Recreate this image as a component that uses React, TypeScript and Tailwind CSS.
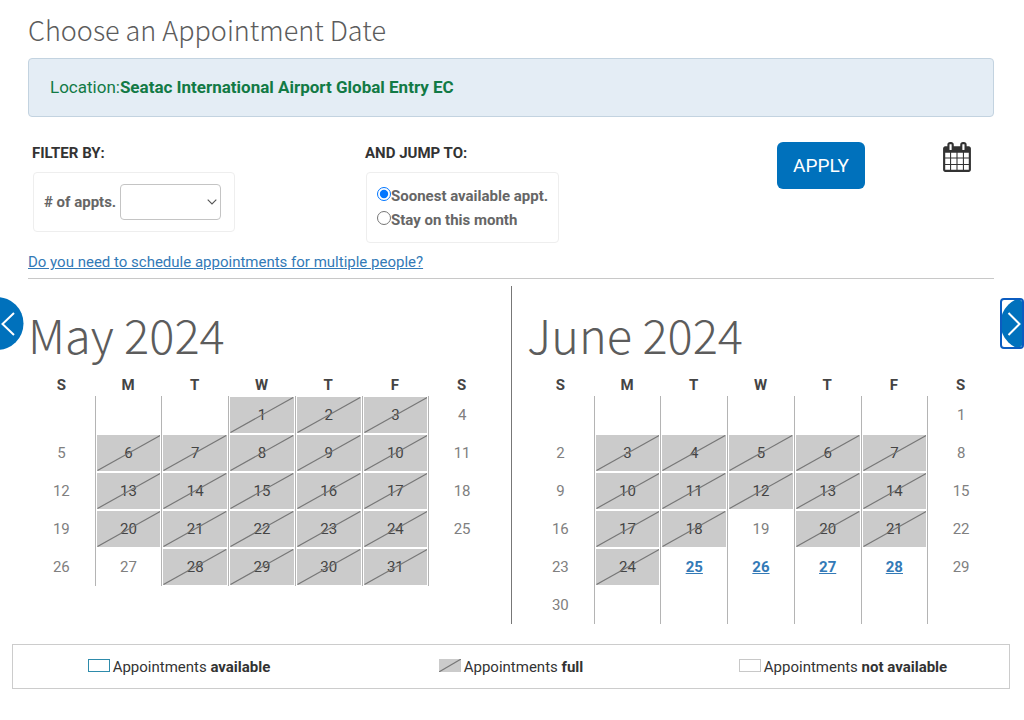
import React, { useState } from 'react';
import { clsx } from 'clsx';

type DayStatus = 'blank' | 'full' | 'open' | 'none';

interface Day {
  label: string;
  status: DayStatus;
}

interface MonthData {
  name: string;
  offset: number; // weekday of the 1st, Sunday = 0
  days: number;
  rows: number;
  full: number[];
  open: number[];
}

const WEEKDAYS = ['S', 'M', 'T', 'W', 'T', 'F', 'S'];

const MAY: MonthData = {
  name: 'May 2024',
  offset: 3,
  days: 31,
  rows: 5,
  full: [1, 2, 3, 6, 7, 8, 9, 10, 13, 14, 15, 16, 17, 20, 21, 22, 23, 24, 28, 29, 30, 31],
  open: [],
};

const JUNE: MonthData = {
  name: 'June 2024',
  offset: 6,
  days: 30,
  rows: 6,
  full: [3, 4, 5, 6, 7, 10, 11, 12, 13, 14, 17, 18, 20, 21, 24],
  open: [25, 26, 27, 28],
};

const buildWeeks = (month: MonthData): Day[][] =>
  Array.from({ length: month.rows }, (_, row) =>
    Array.from({ length: 7 }, (_, col) => {
      const day = row * 7 + col - month.offset + 1;
      if (day < 1 || day > month.days) return { label: '', status: 'blank' };
      if (month.full.includes(day)) return { label: String(day), status: 'full' };
      if (month.open.includes(day)) return { label: String(day), status: 'open' };
      return { label: String(day), status: 'none' };
    })
  );

const Slash = () => (
  <svg className="absolute inset-0 h-full w-full" viewBox="0 0 64 36" preserveAspectRatio="none" aria-hidden="true">
    <path d="M0.5 35.5L63.5 0.5" stroke="#777777" strokeWidth="1.2" vectorEffect="non-scaling-stroke" />
  </svg>
);

const CalendarIcon = () => (
  <svg className="h-[30px] w-7" viewBox="64 0 1664 1792" fill="currentColor" aria-hidden="true">
    <path d="M192 1664h288v-288h-288v288zm352 0h320v-288h-320v288zm-352-352h288v-320h-288v320zm352 0h320v-320h-320v320zm-352-384h288v-288h-288v288zm736 736h320v-288h-320v288zm-384-736h320v-288h-320v288zm768 736h288v-288h-288v288zm-384-352h320v-320h-320v320zm-352-864v-288q0-13-9.5-22.5t-22.5-9.5h-64q-13 0-22.5 9.5t-9.5 22.5v288q0 13 9.5 22.5t22.5 9.5h64q13 0 22.5-9.5t9.5-22.5zm736 864h288v-320h-288v320zm-384-384h320v-288h-320v288zm384 0h288v-288h-288v288zm32-480v-288q0-13-9.5-22.5t-22.5-9.5h-64q-13 0-22.5 9.5t-9.5 22.5v288q0 13 9.5 22.5t22.5 9.5h64q13 0 22.5-9.5t9.5-22.5zm384-64v1280q0 52-38 90t-90 38h-1408q-52 0-90-38t-38-90v-1280q0-52 38-90t90-38h128v-96q0-66 47-113t113-47h64q66 0 113 47t47 113v96h384v-96q0-66 47-113t113-47h64q66 0 113 47t47 113v96h128q52 0 90 38t38 90z" />
  </svg>
);

const DayCell: React.FC<{ day: Day; lined: boolean }> = ({ day, lined }) => (
  <td className={clsx('h-[38px] p-px text-center', lined && 'border-l border-[#b4b4b4]')}>
    {day.status === 'full' && (
      <div className="relative flex h-9 items-center justify-center bg-[#cbcbcb] text-[#444444]">
        <Slash />
        <span>{day.label}</span>
      </div>
    )}
    {day.status === 'open' && (
      <a href="#" className="font-bold text-[#337ab7] underline">{day.label}</a>
    )}
    {day.status === 'none' && <span className="text-[#808080]">{day.label}</span>}
  </td>
);

const Month: React.FC<{ month: MonthData }> = ({ month }) => (
  <>
    <h2 className="pt-4 font-['Noto_Sans_CJK_SC',sans-serif] text-[47px] leading-[64px] font-light text-[#5c5c5c]">
      {month.name}
    </h2>
    <table className="w-full table-fixed border-separate border-spacing-0">
      <thead>
        <tr>
          {WEEKDAYS.map((d, i) => (
            <th key={i} className="h-[30px] p-0 pt-2 leading-5 font-bold text-[#444444]">{d}</th>
          ))}
        </tr>
      </thead>
      <tbody>
        {buildWeeks(month).map((week, row) => (
          <tr key={row}>
            {week.map((day, col) => (
              <DayCell key={col} day={day} lined={col > 0} />
            ))}
          </tr>
        ))}
      </tbody>
    </table>
  </>
);

export default function App() {
  const [count, setCount] = useState('');
  const [jump, setJump] = useState('soonest');

  return (
    <div className="relative overflow-hidden bg-white pt-2.5 font-[Roboto,sans-serif] text-[15px] leading-6 text-[#333333]">
      <main className="mr-[30px] ml-7">
        <h1 className="font-['Noto_Sans_CJK_SC',sans-serif] text-[27px] leading-10 font-light text-[#5c5c5c]">
          Choose an Appointment Date
        </h1>

        <div className="mt-2 rounded border border-[#c3d3e0] bg-[#e4edf5] px-[21px] pt-4 pb-[17px] text-[17px] text-[#127a45]">
          Location:<strong className="font-bold">Seatac International Airport Global Entry EC</strong>
        </div>

        {/* Filters */}
        <div className="flex items-start pt-6">
          <div className="w-[333px] shrink-0 pl-1">
            <div className="font-bold">FILTER BY:</div>
            <div className="mt-[7px] ml-px flex h-[60px] w-[202px] items-center gap-1 rounded border border-[#eeeeee] pl-2.5">
              <label htmlFor="appts" className="font-bold text-[#666666]"># of appts.</label>
              <div className="relative">
                <select
                  id="appts"
                  value={count}
                  onChange={(e) => setCount(e.target.value)}
                  className="block h-9 w-[101px] appearance-none rounded border border-[#c4c4c4] bg-white px-2"
                >
                  <option value=""></option>
                  <option value="1">1</option>
                  <option value="2">2</option>
                </select>
                <svg className="pointer-events-none absolute top-[15px] right-1 h-1.5 w-2.5" viewBox="0 0 10 6" fill="none" aria-hidden="true">
                  <path d="M0.7 0.7L5 5L9.3 0.7" stroke="#555555" strokeWidth="1.1" />
                </svg>
              </div>
            </div>
          </div>

          <div className="grow pl-1">
            <div className="font-bold">AND JUMP TO:</div>
            <div className="mt-[7px] ml-px flex h-[71px] w-[193px] flex-col justify-center rounded border border-[#eeeeee] pt-px pl-2.5 font-bold text-[#666666]">
              <label className="flex items-center">
                <input
                  type="radio"
                  name="jump"
                  className="mb-1 h-3.5 w-3.5 shrink-0 accent-[#0075ff]"
                  checked={jump === 'soonest'}
                  onChange={() => setJump('soonest')}
                />
                Soonest available appt.
              </label>
              <label className="flex items-center">
                <input
                  type="radio"
                  name="jump"
                  className="mb-1 h-3.5 w-3.5 shrink-0 accent-[#0075ff]"
                  checked={jump === 'stay'}
                  onChange={() => setJump('stay')}
                />
                Stay on this month
              </label>
            </div>
          </div>

          <button className="mt-px h-[47px] w-[88px] rounded-md bg-[#0071bc] text-[19px] text-white">APPLY</button>
          <button className="mt-px mr-[23px] ml-[78px]" aria-label="Open calendar">
            <CalendarIcon />
          </button>
        </div>

        <div className="border-b border-[#c8c8c8] pt-[7px] pb-1">
          <a href="#" className="text-[#337ab7] underline">
            Do you need to schedule appointments for multiple people?
          </a>
        </div>

        {/* Months */}
        <div className="mt-[7px] grid grid-cols-2">
          <section className="pr-4">
            <Month month={MAY} />
          </section>
          <section className="border-l border-[#777777] pl-[15px]">
            <Month month={JUNE} />
          </section>
        </div>
      </main>

      {/* Legend */}
      <div className="mt-5 mr-3.5 ml-3 grid h-[45px] grid-cols-3 items-center border border-[#cccccc]">
        <div className="flex items-center justify-center gap-[3px]">
          <span className="mb-0.5 h-[13px] w-[22px] border border-[#2e8bab]" />
          <span>Appointments <b>available</b></span>
        </div>
        <div className="flex items-center justify-center gap-[3px]">
          <span className="relative mb-0.5 h-[13px] w-[22px] bg-[#cbcbcb]">
            <Slash />
          </span>
          <span>Appointments <b>full</b></span>
        </div>
        <div className="flex items-center justify-center gap-[3px]">
          <span className="mb-0.5 h-[13px] w-[22px] border border-[#c8c8c8]" />
          <span>Appointments <b>not available</b></span>
        </div>
      </div>

      {/* Previous / next month */}
      <button className="absolute top-[297px] left-0 h-[53px] w-6" aria-label="Previous month">
        <svg className="h-full w-full" viewBox="0 0 24 53" fill="none">
          <circle cx="-3" cy="26.5" r="26.5" fill="#0071bc" />
          <path d="M14 16L2.5 27L14 38" stroke="#ffffff" strokeWidth="2" />
        </svg>
      </button>
      <button className="absolute top-[298px] right-0 h-[51px] w-6 overflow-hidden rounded border-2 border-[#0b5cc0]" aria-label="Next month">
        <svg className="h-full w-full" viewBox="2 2 20 47" fill="none">
          <circle cx="27" cy="25.5" r="26.5" fill="#0071bc" />
          <path d="M8.5 15L19.5 26L8.5 37" stroke="#ffffff" strokeWidth="2" />
        </svg>
      </button>
    </div>
  );
}
